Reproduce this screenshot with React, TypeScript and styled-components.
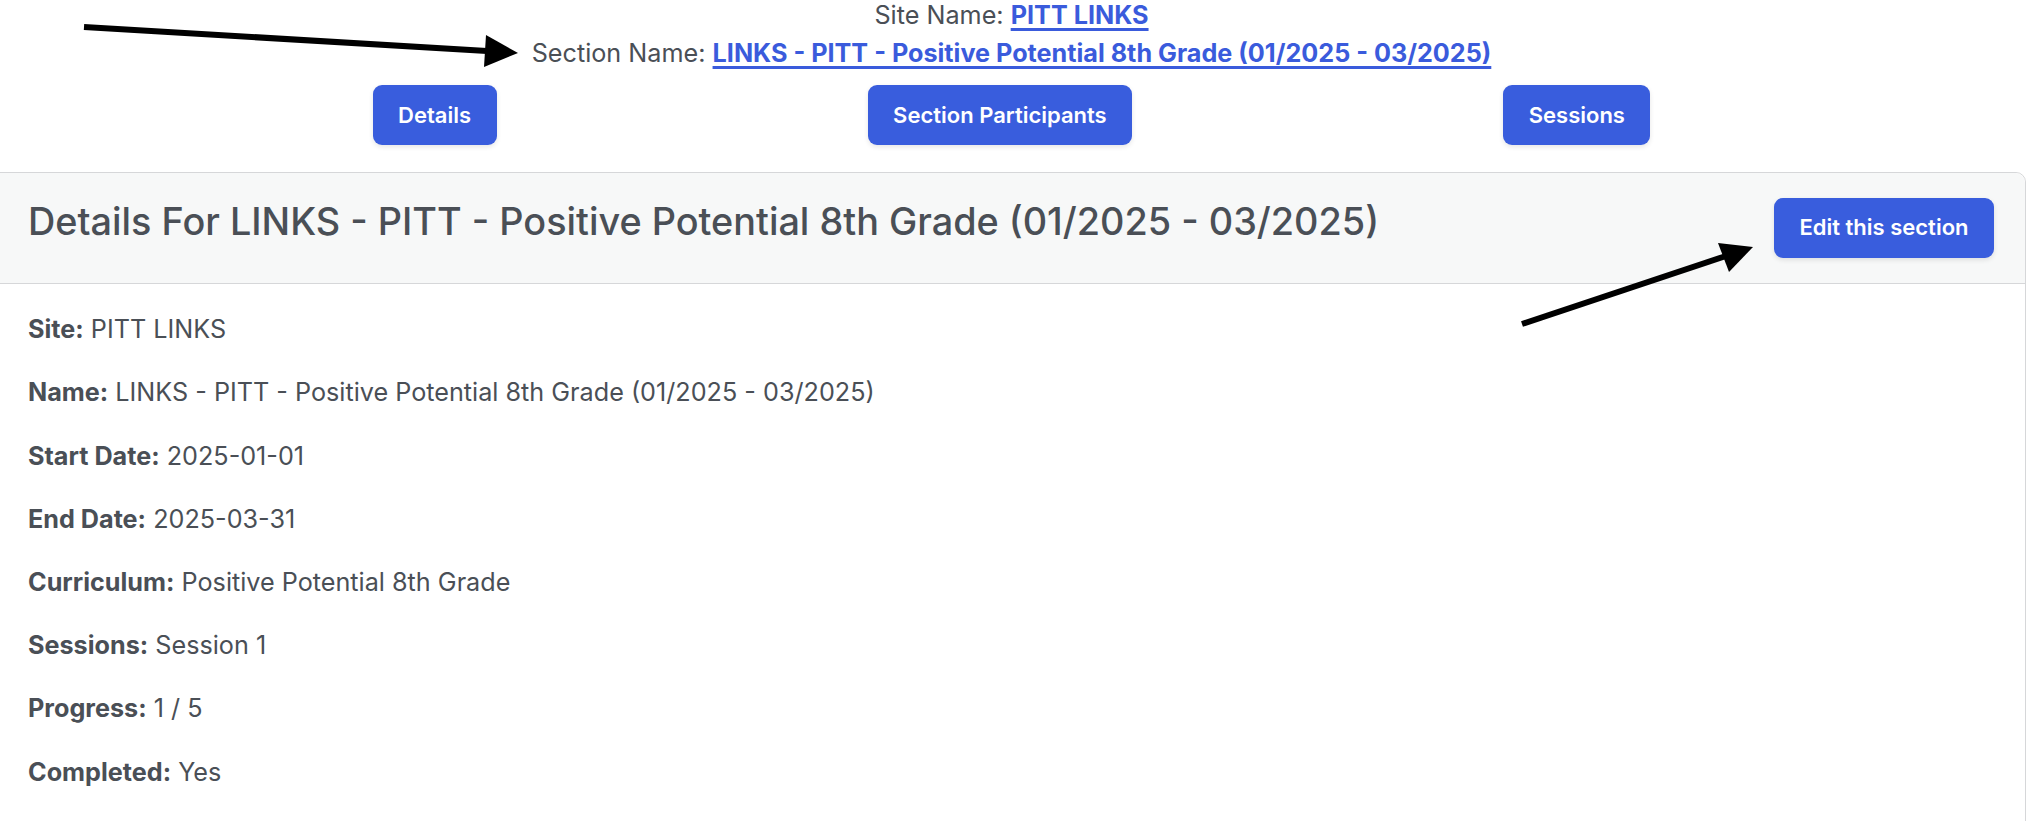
import React from "react";
import styled, { createGlobalStyle } from "styled-components";

const GlobalStyle = createGlobalStyle`
  html, body {
    margin: 0;
    padding: 0;
    background: #ffffff;
  }
  body {
    font-family: Inter, "Noto Sans", "Liberation Sans", sans-serif;
    color: #4a4f56;
    overflow: hidden;
  }
  * { box-sizing: border-box; }
`;

const Page = styled.div`
  position: relative;
  width: 2029px;
  min-height: 821px;
  overflow: hidden;
`;

const TopArea = styled.div`
  padding-right: 6px;
`;

const TopInfo = styled.div`
  margin-top: -3px;
  display: flex;
  flex-direction: column;
  align-items: center;
`;

const InfoLine = styled.div`
  font-size: 25.2px;
  line-height: 1.5;
  color: #4a4f56;
`;

const InfoLink = styled.a`
  font-weight: 700;
  color: #3a5bdc;
  text-decoration: underline;
  text-decoration-thickness: 3px;
  text-underline-offset: 4px;
`;

const NavRow = styled.div`
  width: 1649px;
  margin: 12.6px auto 0;
  display: flex;
  justify-content: space-around;
  align-items: center;
`;

const Button = styled.button`
  font-family: Inter, "Noto Sans", "Liberation Sans", sans-serif;
  font-size: 22px;
  font-weight: 600;
  line-height: 1.5;
  color: #ffffff;
  background: #395ddd;
  border: none;
  border-radius: 9px;
  padding: 13.5px 25.5px;
  box-shadow: 0 2px 5px rgba(0, 0, 0, 0.1);
  cursor: pointer;
  white-space: nowrap;
`;

const Card = styled.section`
  margin: 26.5px 3px 0 -1px;
  border: 1px solid #d6d7d9;
  border-radius: 0 10px 0 0;
  min-height: 660px;
`;

const CardHeader = styled.header`
  display: flex;
  justify-content: space-between;
  align-items: center;
  padding: 25px 31px 25px 28px;
  background: #f7f8f8;
  border-bottom: 1px solid #d6d7d9;
  border-radius: 0 10px 0 0;
`;

const Heading = styled.h4`
  margin: 0 0 12.6px;
  font-size: 37.8px;
  font-weight: 500;
  line-height: 1.2;
  color: #4a4f56;
`;

const CardBody = styled.div`
  padding: 27.5px 28px 25px;
`;

const Row = styled.p`
  margin: 0 0 25.4px;
  font-size: 25.2px;
  line-height: 1.5;
  color: #4a4f56;
`;

const Label = styled.strong`
  font-weight: 700;
`;

const Annotations = styled.svg`
  position: absolute;
  left: 0;
  top: 0;
  pointer-events: none;
`;

const details: [string, string][] = [
  ["Site:", "PITT LINKS"],
  ["Name:", "LINKS - PITT - Positive Potential 8th Grade (01/2025 - 03/2025)"],
  ["Start Date:", "2025-01-01"],
  ["End Date:", "2025-03-31"],
  ["Curriculum:", "Positive Potential 8th Grade"],
  ["Sessions:", "Session 1"],
  ["Progress:", "1 / 5"],
  ["Completed:", "Yes"],
];

export default function App() {
  return (
    <Page>
      <GlobalStyle />
      <TopArea>
        <TopInfo>
          <InfoLine>
            Site Name: <InfoLink href="#">PITT LINKS</InfoLink>
          </InfoLine>
          <InfoLine>
            Section Name:{" "}
            <InfoLink href="#">
              LINKS - PITT - Positive Potential 8th Grade (01/2025 - 03/2025)
            </InfoLink>
          </InfoLine>
        </TopInfo>
        <NavRow>
          <Button>Details</Button>
          <Button>Section Participants</Button>
          <Button>Sessions</Button>
        </NavRow>
      </TopArea>
      <Card>
        <CardHeader>
          <Heading>
            Details For LINKS - PITT - Positive Potential 8th Grade (01/2025 - 03/2025)
          </Heading>
          <Button>Edit this section</Button>
        </CardHeader>
        <CardBody>
          {details.map(([label, value]) => (
            <Row key={label}>
              <Label>{label}</Label> {value}
            </Row>
          ))}
        </CardBody>
      </Card>
      <Annotations width="2029" height="821" viewBox="0 0 2029 821">
        <line x1="84" y1="27" x2="487" y2="51" stroke="#000" strokeWidth="6" />
        <polygon points="518,53 486,35 484,67" fill="#000" />
        <line x1="1522" y1="324" x2="1726" y2="256" stroke="#000" strokeWidth="6" />
        <polygon points="1753,247 1718,243 1729,272" fill="#000" />
      </Annotations>
    </Page>
  );
}
